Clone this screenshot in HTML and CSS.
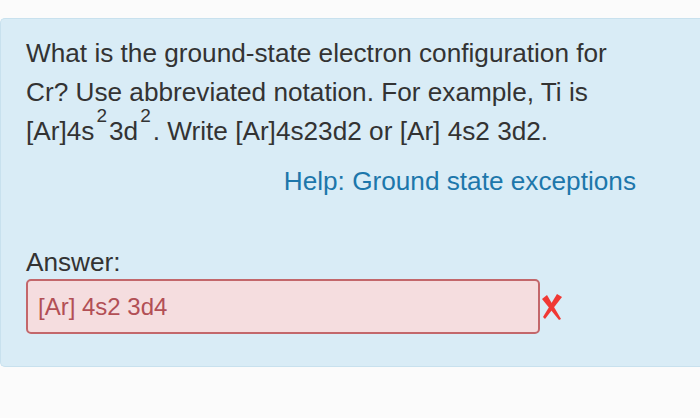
FILE: index.html
```html
<!DOCTYPE html>
<html>
<head>
<meta charset="utf-8">
<link rel="stylesheet" href="styles.css">
</head>
<body>
<div class="page">
  <div class="panel">
    <p class="question">What is the ground-state electron configuration for Cr? Use abbreviated notation. For example, Ti is [Ar]4s<sup>2</sup>3d<sup>2</sup>. Write [Ar]4s23d2 or [Ar] 4s2 3d2.</p>
    <div class="help"><a href="#">Help: Ground state exceptions</a></div>
    <div class="label">Answer:</div>
    <div class="answer-row">
      <div class="input">[Ar] 4s2 3d4</div>
      <svg class="wrong" width="22" height="28" viewBox="0 0 22 28"><path d="M1 6 L6 2 L20 26 L18 27 Z" fill="#f03834"/><path d="M16 1 L21 4 L4 26 L2 24 Z" fill="#f03834"/></svg>
    </div>
  </div>
</div>
</body>
</html>
```
FILE: styles.css
```css
html, body { margin: 0; padding: 0; }
body {
  background: #fbfbfb;
  font-family: "Liberation Sans", Arial, sans-serif;
  width: 700px;
  height: 418px;
  overflow: hidden;
}
.page { padding-top: 18px; }
.panel {
  background: #d9ecf6;
  border: 1px solid #c8e1ee;
  border-right: none;
  border-radius: 5px 0 0 5px;
  height: 349px;
  box-sizing: border-box;
  padding: 15px 0 0 25px;
  color: #333;
}
.question {
  margin: 0;
  width: 612px;
  font-size: 26.2px;
  line-height: 39px;
}
.question sup {
  font-size: 19px;
  line-height: 0;
  vertical-align: 0;
  position: relative;
  top: -18px;
  padding: 0 2px;
}
.help {
  width: 610px;
  text-align: right;
  margin-top: 15px;
  font-size: 26.2px;
  line-height: 30px;
}
.help a { color: #1d77ab; text-decoration: none; }
.label {
  margin-top: 51px;
  font-size: 26.2px;
  line-height: 30px;
}
.answer-row {
  display: flex;
  align-items: center;
  margin-top: 2px;
}
.input {
  width: 514px;
  height: 55px;
  box-sizing: border-box;
  border: 2px solid #c3676b;
  border-radius: 5px;
  background: #f5dddf;
  color: #b24f55;
  font-size: 24px;
  padding-left: 10px;
  display: flex;
  align-items: center;
}
.wrong { margin-left: 1px; }
```
